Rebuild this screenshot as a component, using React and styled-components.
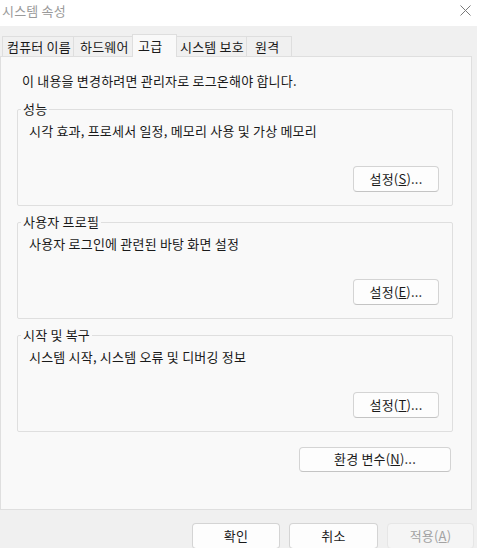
import React, { useState } from "react";
import styled, { createGlobalStyle } from "styled-components";

const GlobalStyle = createGlobalStyle`
  html, body {
    margin: 0;
    padding: 0;
    background: #f0f0f0;
  }
  body {
    font-family: "Noto Sans CJK KR", "Noto Sans", sans-serif;
    font-size: 13px;
    letter-spacing: 0.2px;
    color: #1a1a1a;
  }
`;

const Window = styled.div`
  width: 477px;
  height: 548px;
  display: flex;
  flex-direction: column;
  background: #f0f0f0;
  overflow: hidden;
`;

const TitleBar = styled.div`
  height: 26px;
  flex: none;
  display: flex;
  align-items: center;
  justify-content: space-between;
  padding: 0 6px 5px 2px;
  box-sizing: border-box;
  background: #ffffff;
  color: #9a9a9a;
  line-height: 16px;
`;

const CloseButton = styled.span`
  display: flex;
  width: 11px;
  height: 11px;
`;

const Body = styled.div`
  flex: 1;
  display: flex;
  flex-direction: column;
  padding-top: 8px;
`;

const TabRow = styled.div`
  display: flex;
  align-items: flex-end;
  padding-left: 2px;
  height: 22px;
`;

const Tab = styled.button`
  width: ${(p) => p.$width}px;
  height: ${(p) => (p.$active ? 23 : 20)}px;
  margin-bottom: ${(p) => (p.$active ? -1 : 0)}px;
  position: relative;
  z-index: ${(p) => (p.$active ? 1 : 0)};
  display: flex;
  align-items: center;
  justify-content: flex-start;
  padding: 0 0 ${(p) => (p.$active ? 1 : 0)}px ${(p) => p.$pad}px;
  box-sizing: border-box;
  border: 1px solid #dedede;
  border-bottom: none;
  border-left-width: ${(p) => (p.$first || p.$active ? 1 : 0)}px;
  border-right-width: ${(p) => (p.$beforeActive ? 0 : 1)}px;
  background: ${(p) => (p.$active ? "#f9f9f9" : "#f0f0f0")};
  font: inherit;
  letter-spacing: inherit;
  line-height: 16px;
  white-space: nowrap;
  overflow: hidden;
  color: #1a1a1a;
  cursor: default;
`;

const Panel = styled.div`
  width: 472px;
  height: 454px;
  box-sizing: border-box;
  border: 1px solid #dfdfdf;
  background: #f9f9f9;
  padding: 16px 18px 0 16px;
  display: flex;
  flex-direction: column;
`;

const Notice = styled.p`
  margin: 0 0 12px 5px;
  line-height: 16px;
`;

const Group = styled.fieldset`
  margin: 0 0 8px 0;
  padding: 0 13px 13px 11px;
  border: 1px solid #dfdfdf;
  border-radius: 2px;
  min-width: 0;
`;

const Legend = styled.legend`
  margin-left: -8px;
  padding: 0 2px;
  line-height: 16px;
`;

const Description = styled.p`
  margin: 6px 0 0 0;
  line-height: 16px;
`;

const ButtonRow = styled.div`
  display: flex;
  justify-content: flex-end;
  gap: ${(p) => p.$gap || 0}px;
  margin-top: ${(p) => p.$top || 0}px;
  padding-right: ${(p) => p.$right || 0}px;
`;

const Button = styled.button`
  width: ${(p) => p.$width}px;
  height: ${(p) => p.$height || 26}px;
  box-sizing: border-box;
  border: 1px solid ${(p) => (p.disabled ? "#e6e6e6" : "#d4d4d4")};
  border-bottom-color: ${(p) => (p.disabled ? "#e6e6e6" : "#c4c4c4")};
  border-radius: 4px;
  background: ${(p) => (p.disabled ? "#f5f5f5" : "#fdfdfd")};
  color: ${(p) => (p.disabled ? "#a2a2a2" : "#1a1a1a")};
  font: inherit;
  letter-spacing: inherit;
  line-height: 16px;
  padding: 0 0 1px 0;
  cursor: default;
`;

const CloseIcon = () => (
  <svg width="11" height="11" viewBox="0 0 11 11">
    <path d="M0.5 0.5 L10.5 10.5 M10.5 0.5 L0.5 10.5" stroke="#7a7a7a" strokeWidth="1" fill="none" />
  </svg>
);

const tabs = [
  { label: "컴퓨터 이름", width: 72, pad: 4 },
  { label: "하드웨어", width: 58, pad: 6 },
  { label: "고급", width: 45, pad: 5 },
  { label: "시스템 보호", width: 70, pad: 3 },
  { label: "원격", width: 45, pad: 8 },
];

const groups = [
  { title: "성능", text: "시각 효과, 프로세서 일정, 메모리 사용 및 가상 메모리", key: "S" },
  { title: "사용자 프로필", text: "사용자 로그인에 관련된 바탕 화면 설정", key: "E" },
  { title: "시작 및 복구", text: "시스템 시작, 시스템 오류 및 디버깅 정보", key: "T" },
];

const App = () => {
  const [active, setActive] = useState(2);

  return (
    <Window>
      <GlobalStyle />
      <TitleBar>
        <span>시스템 속성</span>
        <CloseButton>
          <CloseIcon />
        </CloseButton>
      </TitleBar>
      <Body>
        <TabRow>
          {tabs.map((tab, index) => (
            <Tab
              key={tab.label}
              $width={tab.width}
              $pad={tab.pad}
              $active={index === active}
              $first={index === 0}
              $beforeActive={index === active - 1}
              onClick={() => setActive(index)}
            >
              {tab.label}
            </Tab>
          ))}
        </TabRow>
        <Panel>
          <Notice>이 내용을 변경하려면 관리자로 로그온해야 합니다.</Notice>
          {groups.map((group) => (
            <Group key={group.title}>
              <Legend>{group.title}</Legend>
              <Description>{group.text}</Description>
              <ButtonRow $top={27}>
                <Button $width={86}>
                  설정(<u>{group.key}</u>)...
                </Button>
              </ButtonRow>
            </Group>
          ))}
          <ButtonRow $top={7} $right={2}>
            <Button $width={152} $height={25}>
              환경 변수(<u>N</u>)...
            </Button>
          </ButtonRow>
        </Panel>
        <ButtonRow $top={13} $gap={9} $right={3}>
          <Button $width={88}>확인</Button>
          <Button $width={89}>취소</Button>
          <Button $width={87} disabled>
            적용(<u>A</u>)
          </Button>
        </ButtonRow>
      </Body>
    </Window>
  );
};

export default App;
